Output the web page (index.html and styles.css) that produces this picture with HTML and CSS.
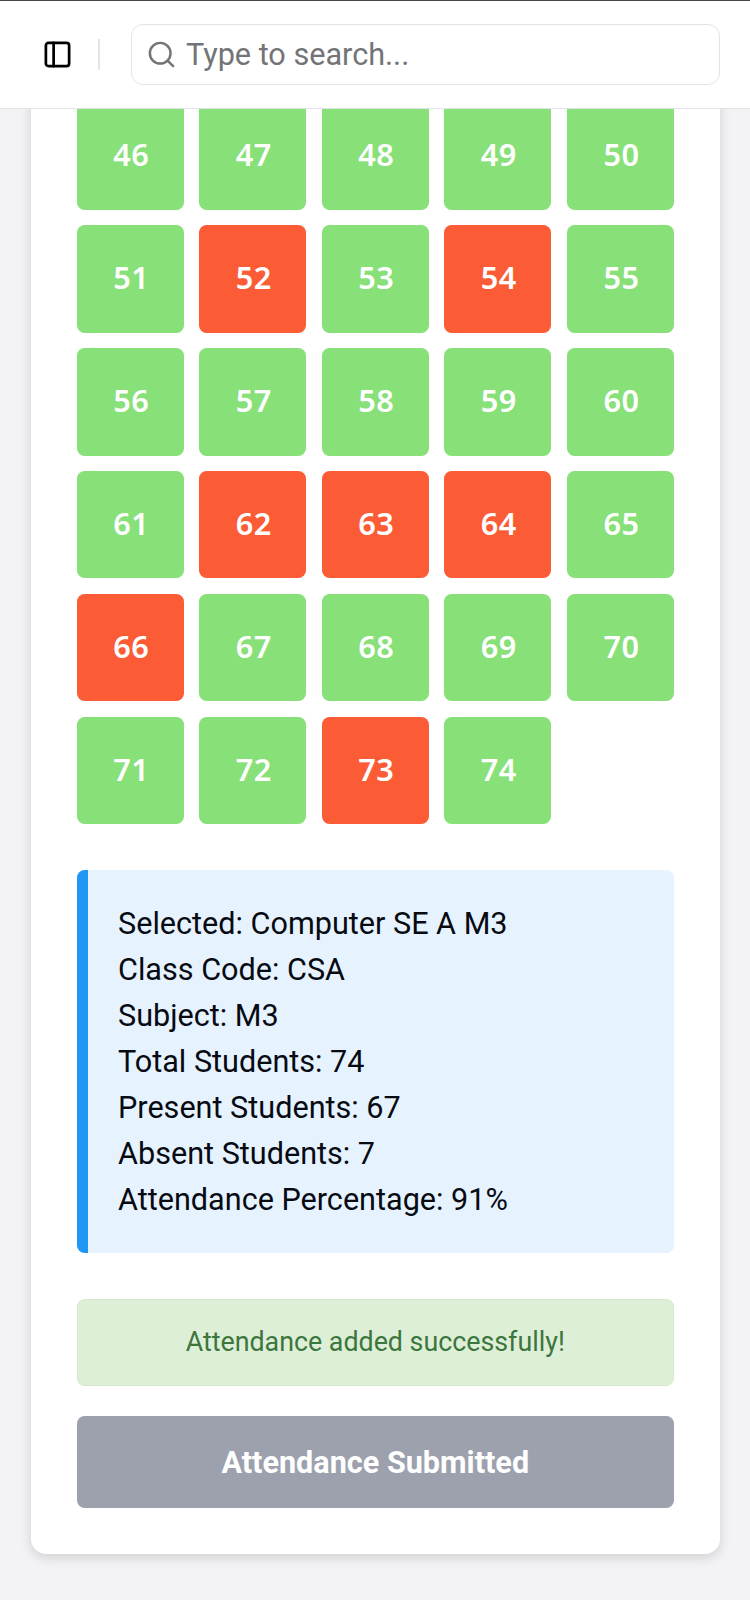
FILE: index.html
```html
<!DOCTYPE html>
<html lang="en">
<head>
<meta charset="utf-8">
<title>Attendance</title>
<link rel="stylesheet" href="styles.css">
</head>
<body>
<div class="app">
  <header class="topbar">
    <button class="sidebar-toggle" aria-label="Toggle sidebar">
      <svg class="icon-panel" viewBox="0 0 24 24" fill="none" stroke="currentColor" stroke-width="2.1" stroke-linecap="round" stroke-linejoin="round"><rect x="3" y="3" width="18" height="18" rx="2"/><path d="M9 3v18"/></svg>
    </button>
    <span class="divider"></span>
    <div class="search">
      <svg class="icon-search" viewBox="0 0 24 24" fill="none" stroke="currentColor" stroke-width="1.9" stroke-linecap="round" stroke-linejoin="round"><circle cx="11" cy="11" r="8"/><path d="m21 21-4.3-4.3"/></svg>
      <span class="placeholder">Type to search...</span>
    </div>
  </header>
  <main class="content">
    <section class="card">
      <div class="grid">
        <div class="tile">46</div><div class="tile">47</div><div class="tile">48</div><div class="tile">49</div><div class="tile">50</div>
        <div class="tile">51</div><div class="tile absent">52</div><div class="tile">53</div><div class="tile absent">54</div><div class="tile">55</div>
        <div class="tile">56</div><div class="tile">57</div><div class="tile">58</div><div class="tile">59</div><div class="tile">60</div>
        <div class="tile">61</div><div class="tile absent">62</div><div class="tile absent">63</div><div class="tile absent">64</div><div class="tile">65</div>
        <div class="tile absent">66</div><div class="tile">67</div><div class="tile">68</div><div class="tile">69</div><div class="tile">70</div>
        <div class="tile">71</div><div class="tile">72</div><div class="tile absent">73</div><div class="tile">74</div>
      </div>
      <div class="summary">
        <p>Selected: Computer SE A M3</p>
        <p>Class Code: CSA</p>
        <p>Subject: M3</p>
        <p>Total Students: 74</p>
        <p>Present Students: 67</p>
        <p>Absent Students: 7</p>
        <p>Attendance Percentage: 91%</p>
      </div>
      <div class="success">Attendance added successfully!</div>
      <button class="submit">Attendance Submitted</button>
    </section>
  </main>
</div>
</body>
</html>
```
FILE: styles.css
```css
* { box-sizing: border-box; }
body { margin: 0; font-family: Roboto, "Liberation Sans", sans-serif; color: #080a12; }
button { border: 0; padding: 0; background: none; font: inherit; }
p { margin: 0; }
.app { display: flex; flex-direction: column; height: 1600px; background: #f3f3f5; overflow: hidden; }
.topbar { display: flex; align-items: center; flex: none; height: 109px; padding: 0 30px 0 39px; background: #fff; border-top: 1px solid #47454a; border-bottom: 1px solid #e2e3e6; }
.sidebar-toggle { display: flex; width: 36px; height: 36px; align-items: center; justify-content: center; color: #000; }
.icon-panel { flex: none; width: 31px; height: 31px; }
.divider { width: 2px; height: 31px; margin-left: 23px; background: #e4e5e8; }
.search { display: flex; align-items: center; flex: 1; height: 61px; margin-left: 31px; padding-left: 14px; border: 1px solid #e2e3e5; border-radius: 12px; color: #737477; }
.icon-search { width: 31px; height: 31px; margin-right: 9px; }
.placeholder { font-size: 30.6px; line-height: 46px; }
.content { display: flex; flex-direction: column; justify-content: flex-end; flex: 1; min-height: 0; overflow: hidden; padding: 0 30px 46px 30.5px; }
.card { flex: none; padding: 46px; background: #fff; border-radius: 15.3px; box-shadow: 0 4px 12px rgba(0, 0, 0, .14); }
.grid { display: grid; grid-template-columns: repeat(5, 1fr); gap: 15.65px 15.3px; }
.tile { display: flex; align-items: center; justify-content: center; aspect-ratio: 1; padding: 0 0 4px 2px; border-radius: 7.7px; background: #88e079; color: #fff; font: 600 30.7px "Noto Sans", "Open Sans", sans-serif; letter-spacing: .4px; }
.tile.absent { background: #fb5c36; }
.summary { margin-top: 46px; padding: 31px 30.5px 29.9px; border-left: 11.5px solid #2196f3; border-radius: 7.7px; background: #e6f3ff; font-size: 30.6px; line-height: 45.95px; }
.success { display: flex; align-items: center; justify-content: center; height: 87px; margin-top: 46px; border: 1px solid #d5e8c9; border-radius: 7.7px; background: #deefd8; color: #3c763d; font-size: 26.8px; }
.submit { display: block; width: 100%; height: 92px; margin-top: 30.2px; border-radius: 7.7px; background: #9ca1ad; color: #fff; font-size: 30.6px; font-weight: 700; }
```
